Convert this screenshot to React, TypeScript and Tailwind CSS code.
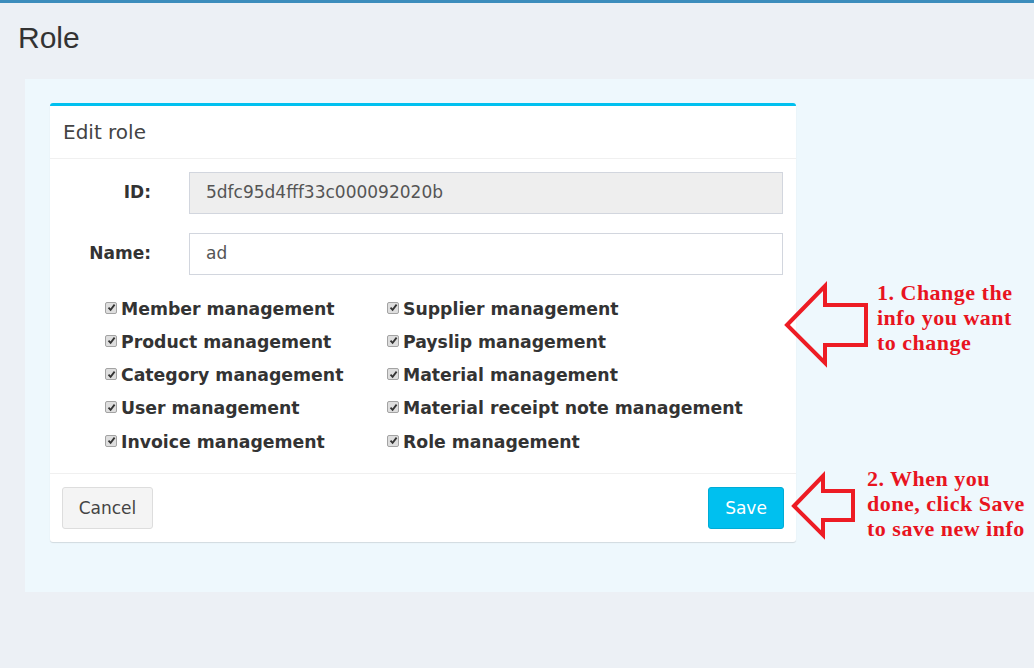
const left = ["Member management", "Product management", "Category management", "User management", "Invoice management"]
const right = [
	"Supplier management",
	"Payslip management",
	"Material management",
	"Material receipt note management",
	"Role management",
]

function Check({ label }: { label: string }) {
	return (
		<label className="flex h-[33.25px] items-center">
			<span className="mr-[4px] flex h-[12px] w-[12px] -translate-y-[2px] items-center justify-center rounded-[2px] border border-[#a3a3a3] bg-[#dedede]">
				<svg width="9" height="9" viewBox="0 0 9 9">
					<path d="M1.5 4.6 L3.6 6.8 L7.6 1.6" fill="none" stroke="#333" strokeWidth="1.8" />
				</svg>
			</span>
			<span className="whitespace-nowrap text-[17.3px] font-bold text-[#333]">{label}</span>
		</label>
	)
}

export default function App() {
	return (
		<div className="relative h-[668px] w-full overflow-hidden border-t-[3px] border-[#3c8dbc] bg-[#ecf0f5] font-['DejaVu_Sans',sans-serif]">
			<h1 className="pl-[18px] pt-[18px] font-['Liberation_Sans',Arial,sans-serif] text-[30px] leading-[33px] text-[#333]">
				Role
			</h1>
			<div className="ml-[25px] mt-[25px] bg-[#eef8fd] pb-[50px] pl-[25px] pt-[24px]">
				<div className="w-[746px] rounded-[3px] border-t-[3px] border-[#00c0ef] bg-white shadow-[0_1px_1px_rgba(0,0,0,0.12)]">
					<div className="flex h-[53px] items-center border-b border-[#f0f0f0] px-[13px] text-[20px] text-[#444]">
						Edit role
					</div>
					<div className="pb-[14px] pr-[13px] pt-[13px]">
						<div className="flex items-center">
							<span className="w-[101px] text-right text-[17px] font-bold text-[#333]">ID:</span>
							<div className="ml-[38px] flex h-[42px] flex-1 items-center border border-[#d2d6de] bg-[#eeeeee] px-[16px] text-[17px] text-[#555]">
								5dfc95d4fff33c000092020b
							</div>
						</div>
						<div className="mt-[19px] flex items-center">
							<span className="w-[101px] text-right text-[17px] font-bold text-[#333]">Name:</span>
							<div className="ml-[38px] flex h-[42px] flex-1 items-center border border-[#d2d6de] bg-white px-[16px] text-[17px] text-[#555]">
								ad
							</div>
						</div>
						<div className="ml-[55px] mt-[18px] grid grid-cols-[282px_1fr]">
							<div>
								{left.map((l) => (
									<Check key={l} label={l} />
								))}
							</div>
							<div>
								{right.map((l) => (
									<Check key={l} label={l} />
								))}
							</div>
						</div>
					</div>
					<div className="flex items-center justify-between border-t border-[#f0f0f0] px-[12px] pb-[13px] pt-[13px]">
						<button className="h-[42px] w-[91px] rounded-[3px] border border-[#ddd] bg-[#f4f4f4] text-[17px] text-[#444]">
							Cancel
						</button>
						<button className="h-[42px] w-[76px] rounded-[3px] border border-[#00acd6] bg-[#00c0ef] text-[17px] text-white">
							Save
						</button>
					</div>
				</div>
			</div>

			<svg className="absolute left-0 top-0" width="1034" height="668" style={{ pointerEvents: "none" }}>
				<polygon
					points="787,322 825,283 825,302 866,302 866,342 825,342 825,360"
					fill="none"
					stroke="#ed1c24"
					strokeWidth="4"
				/>
				<polygon
					points="794,503 823,473 823,488 853,488 853,517 823,517 823,532"
					fill="none"
					stroke="#ed1c24"
					strokeWidth="4"
				/>
			</svg>
			<div className="absolute left-[877px] top-[277px] font-['Liberation_Serif',serif] text-[22px] font-bold leading-[25px] tracking-[0.5px] text-[#e8141f]">
				1. Change the
				<br />
				info you want
				<br />
				to change
			</div>
			<div className="absolute left-[867px] top-[463px] font-['Liberation_Serif',serif] text-[22px] font-bold leading-[25px] tracking-[0.5px] text-[#e8141f]">
				2. When you
				<br />
				done, click Save
				<br />
				to save new info
			</div>
		</div>
	)
}
